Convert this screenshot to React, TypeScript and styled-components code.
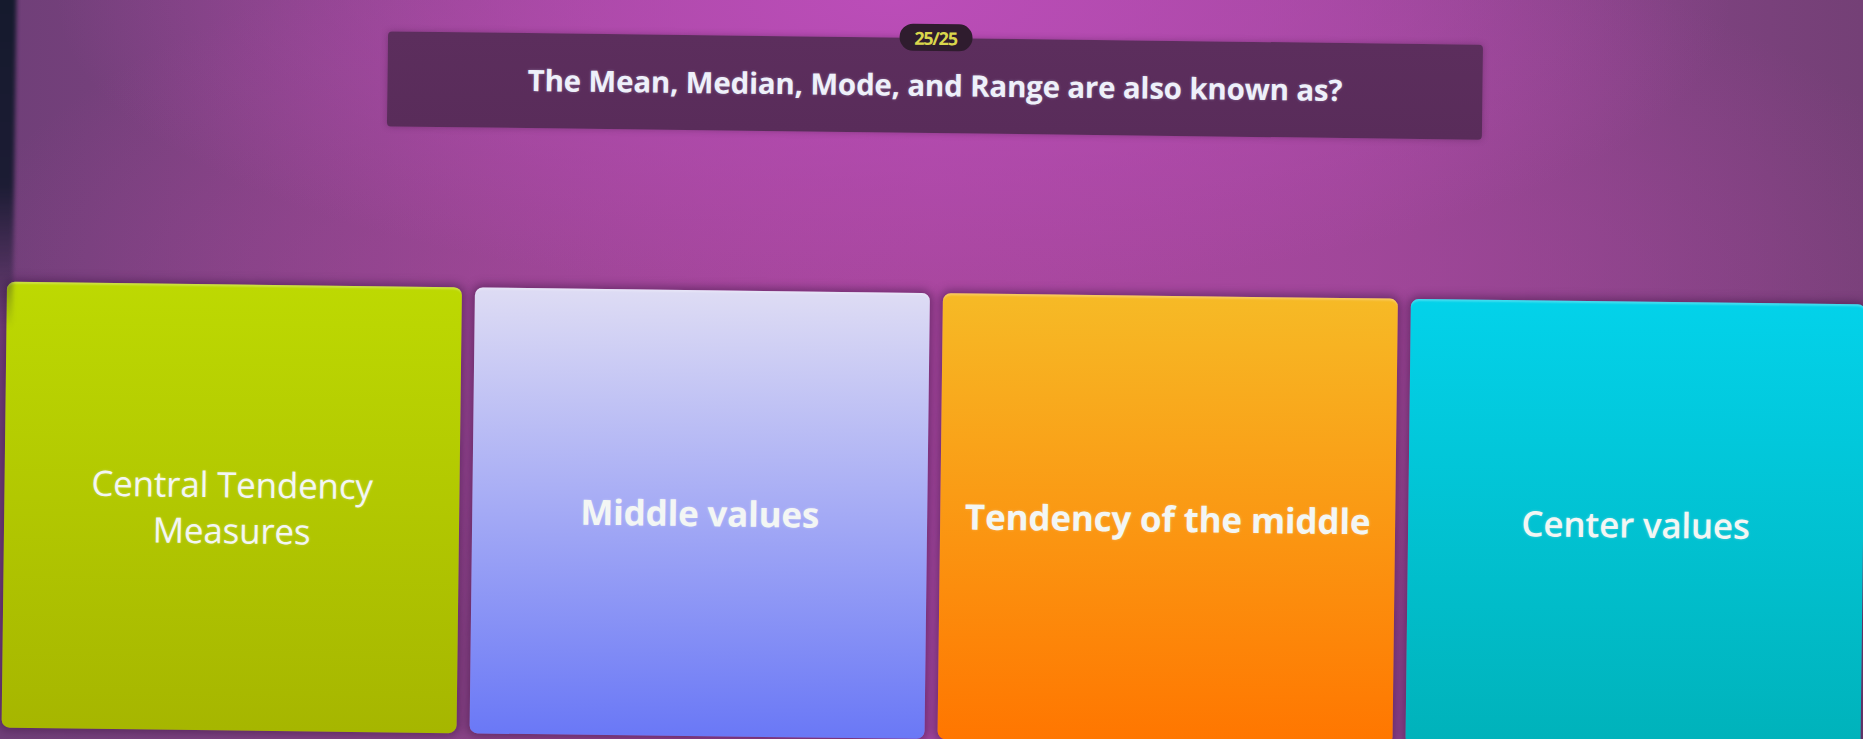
import React from 'react';
import styled, {createGlobalStyle} from "styled-components";

const GlobalStyle = createGlobalStyle`
  html, body {
    margin: 0;
    padding: 0;
    height: 739px;
    overflow: hidden;
  }
  body {
    background:
      radial-gradient(ellipse 45% 40% at 48% 0%, #bb4db8 0%, rgba(187, 77, 184, 0) 100%),
      radial-gradient(ellipse 55% 55% at 52% 40%, #a9479f 0%, rgba(169, 71, 159, 0) 100%),
      linear-gradient(90deg, #6f3f78 0%, #8a4488 25%, #a347a0 50%, #944692 72%, #7e4280 90%, #744076 100%);
  }
  #root {
    height: 739px;
  }
`

type Option = {
    text: string[]
    top: string
    bottom: string
    weight: number
}

const options: Option[] = [
    {text: ['Central Tendency', 'Measures'], top: '#bdd902', bottom: '#a6b600', weight: 400},
    {text: ['Middle values'], top: '#dedcf4', bottom: '#6a78f6', weight: 700},
    {text: ['Tendency of the middle'], top: '#f6ba26', bottom: '#ff7600', weight: 700},
    {text: ['Center values'], top: '#03d2ea', bottom: '#00b2ba', weight: 600},
]

const App = () => {
    return (
        <>
            <GlobalStyle/>
            <Screen>
                <Vignette/>
                <QuestionBar>
                    <Counter>25/25</Counter>
                    <QuestionText>
                        The Mean, Median, Mode, and Range are also known as?
                    </QuestionText>
                </QuestionBar>
                <OptionsRow>
                    {options.map((o) => (
                        <OptionCard key={o.text.join(' ')} $top={o.top} $bottom={o.bottom}>
                            <OptionText $weight={o.weight}>
                                {o.text.map((line) => <span key={line}>{line}</span>)}
                            </OptionText>
                        </OptionCard>
                    ))}
                </OptionsRow>
            </Screen>
        </>
    );
};

export default App;


const Screen = styled.div`
  position: relative;
  width: 1863px;
  height: 739px;
  display: flex;
  flex-direction: column;
  align-items: center;
  transform: rotate(0.7deg);
  transform-origin: 50% 50%;
  font-family: "Open Sans", "Liberation Sans", sans-serif;
`

const Vignette = styled.div`
  position: absolute;
  left: -14px;
  top: -20px;
  width: 26px;
  height: 360px;
  background: linear-gradient(180deg, #141a2c 0%, #1c1c34 60%, rgba(40, 30, 60, 0) 100%);
  filter: blur(2px);
`

const QuestionBar = styled.div`
  position: relative;
  margin-top: 38px;
  width: 1095px;
  height: 99px;
  box-sizing: border-box;
  padding-bottom: 2px;
  display: flex;
  align-items: center;
  justify-content: center;
  background: linear-gradient(180deg, #5c2e5d 0%, #592c5a 100%);
  border-radius: 4px;
  box-shadow: 0 0 6px rgba(60, 20, 60, 0.35);
`

const Counter = styled.div`
  position: absolute;
  top: -14px;
  left: 50%;
  transform: translateX(-50%);
  width: 73px;
  height: 27px;
  border-radius: 14px;
  background: #2f1c2e;
  color: #d9d64c;
  font-size: 18px;
  font-weight: 700;
  letter-spacing: -1.2px;
  display: flex;
  align-items: center;
  justify-content: center;
`

const QuestionText = styled.div`
  color: #eef0fa;
  font-size: 29.5px;
  font-weight: 700;
  letter-spacing: -0.2px;
  text-shadow: 0 0 3px rgba(220, 230, 255, 0.35);
`

const OptionsRow = styled.div`
  align-self: flex-start;
  margin-top: 160px;
  padding-left: 6px;
  display: grid;
  grid-template-columns: repeat(4, 455px);
  gap: 13px;
`

const OptionCard = styled.div<{ $top: string, $bottom: string }>`
  height: 446px;
  border-radius: 8px;
  display: flex;
  align-items: center;
  justify-content: center;
  background: linear-gradient(180deg, ${p => p.$top} 0%, ${p => p.$bottom} 100%);
  box-shadow: inset 0 3px 2px -1px rgba(255, 255, 255, 0.25), 0 0 9px 3px rgba(70, 25, 75, 0.55);
`

const OptionText = styled.div<{ $weight: number }>`
  display: flex;
  flex-direction: column;
  align-items: center;
  color: #f3f6f4;
  font-size: 35px;
  line-height: 46px;
  font-weight: ${p => p.$weight};
  letter-spacing: -0.2px;
  text-shadow: 0 0 3px rgba(255, 255, 255, 0.3);
`
